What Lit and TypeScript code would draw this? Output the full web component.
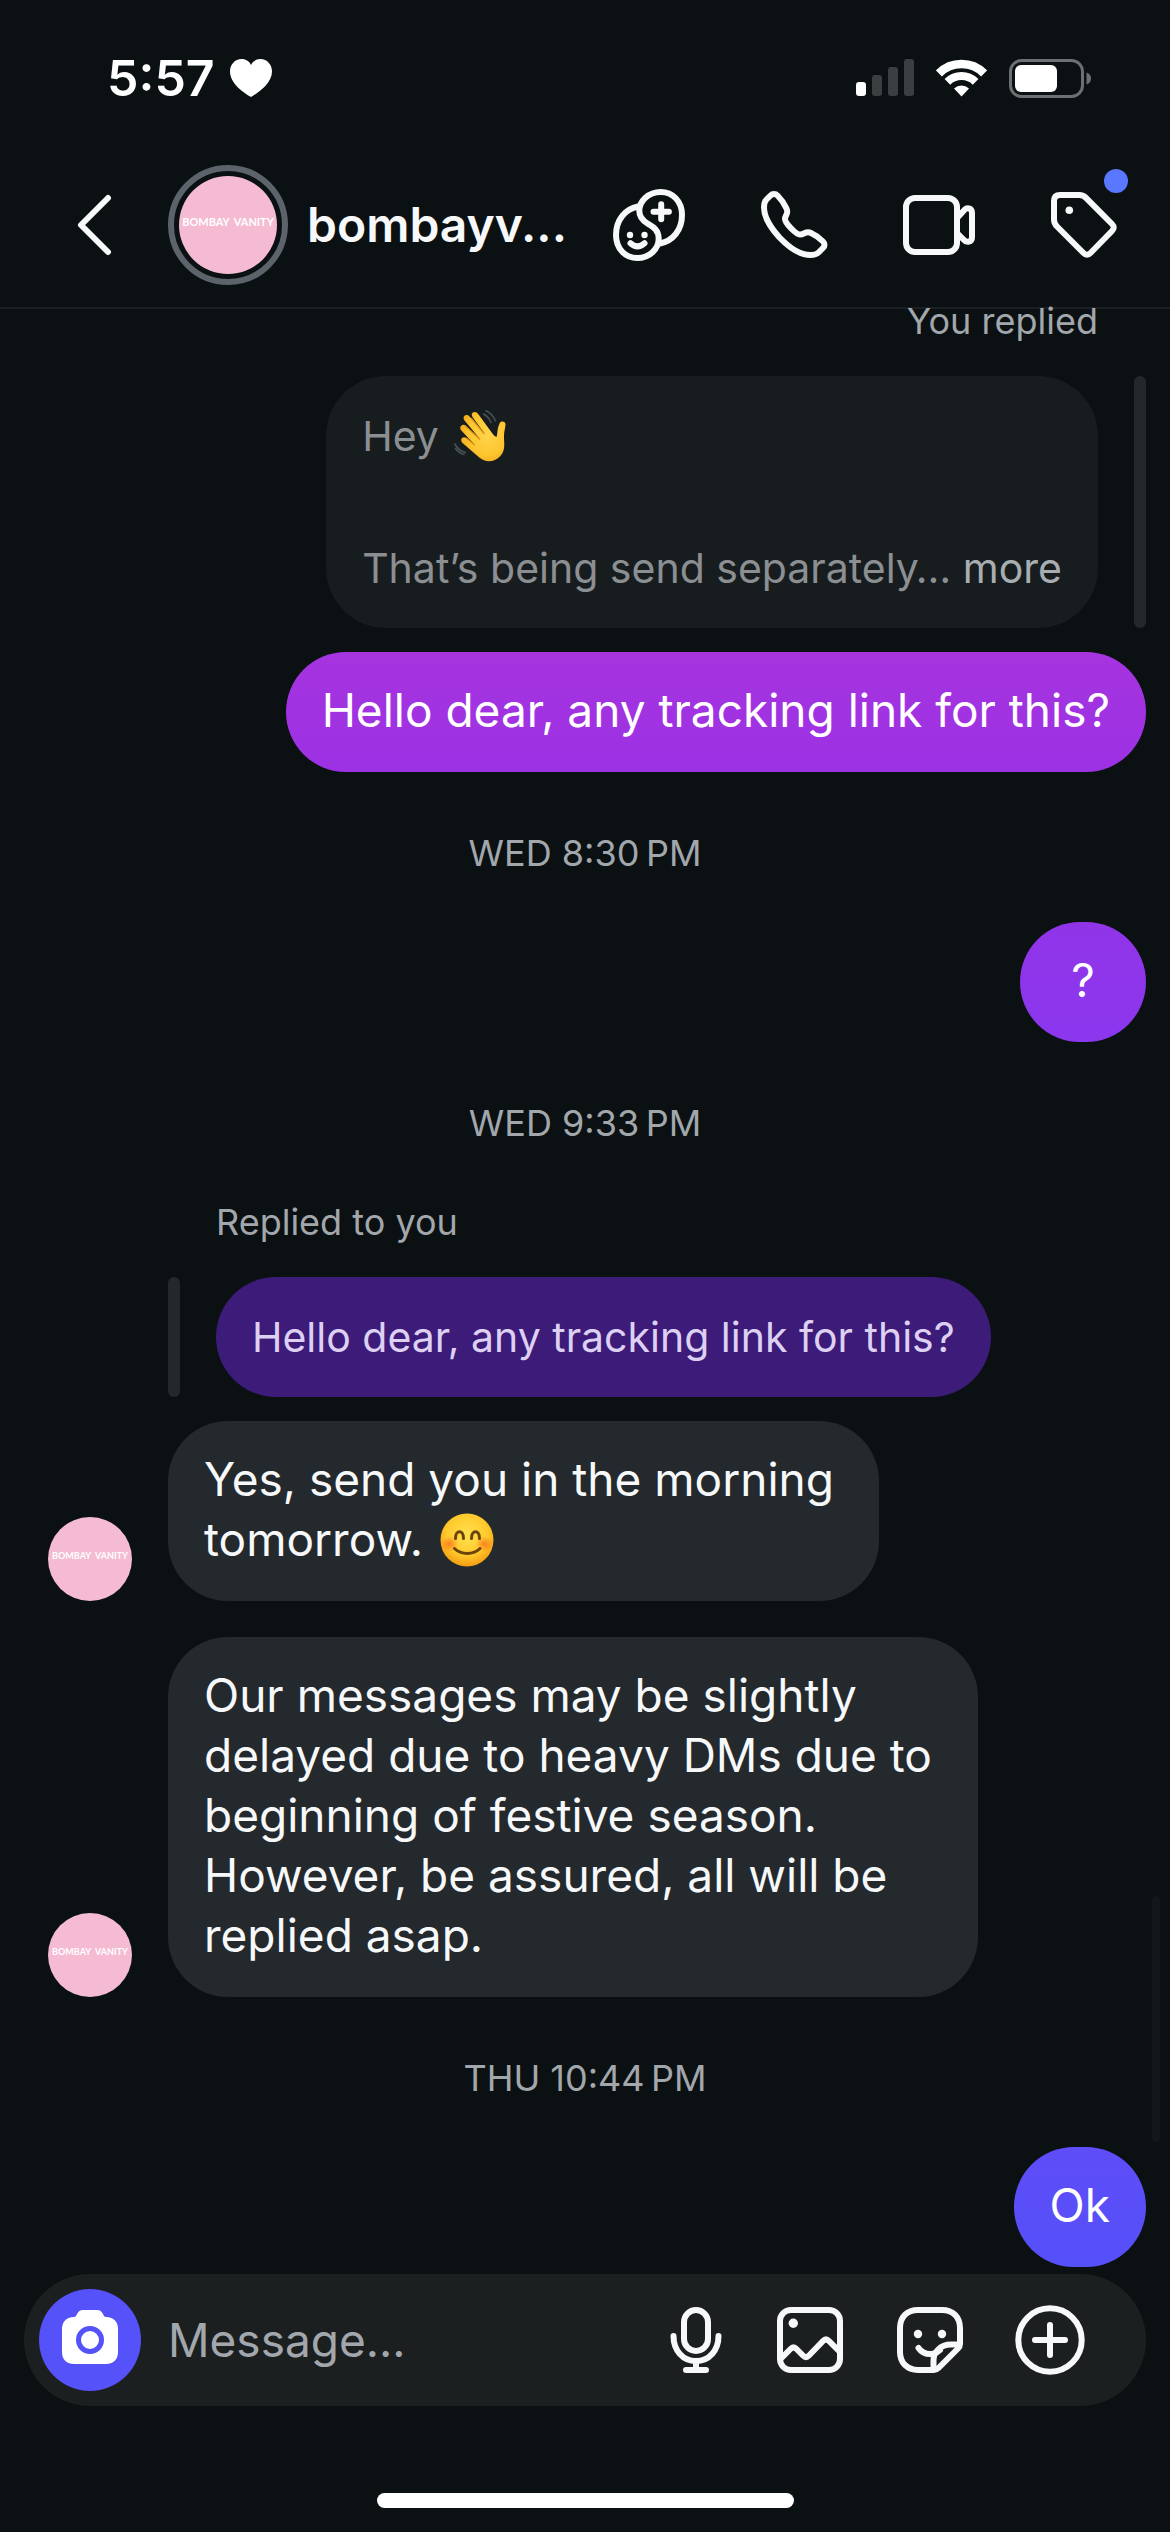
import { LitElement, html, css, svg, nothing } from "lit";
import { customElement, property } from "lit/decorators.js";

type Message =
  | { kind: "stamp"; text: string }
  | { kind: "sent"; text: string; tone: string }
  | { kind: "received"; body: unknown; size: string }
  | { kind: "sent-quote" }
  | { kind: "received-quote"; text: string };

const icons = {
  back: svg`<path d="M48 9 21 36l27 27"/>`,
  avatars: svg`
    <path d="M25 17.500C12 20 3 31 3 46c0 14 9.500 23 21.300 23C36.500 69 45.700 60 45.700 49.500 45.700 40 38.500 37 34.500 34.500 29.500 31.500 26.300 27 26.300 21.800 26.300 12 35.500 3 47.700 3 59.500 3 69 12 69 26c0 15-9 26-22 28.500"/>
    <path d="M40.500 22.700h15.400M48.200 15.200v15"/>
    <path d="M17.500 54.300q7 6.200 14 0"/>
    <circle class="dot" cx="17" cy="46" r="3.200"/><circle class="dot" cx="31.500" cy="46" r="3.200"/>`,
  phone: svg`<path d="M19.500 6.500C17.500 4.500 14.500 4.500 12.500 6.500l-4 4C6.500 12.500 6 15 6 18.500 6 29 12.500 38.500 21.500 48.500 31 58.500 42 66 52.500 66c3.500 0 6-.5 8-2.500L65 59c2-2 2-4.500 0-6.500C61.500 49 57.500 46 53 44c-5-2.500-6.500 1.500-11 1.500C38 45.500 27 34 27 30s4-5.500 1.500-10.500c-2-4.500-5-9-9-13Z"/>`,
  video: svg`<rect x="3" y="9" width="51" height="54" rx="9"/><path d="m55 28 5.500-6C63.500 18 69 18.500 69 24v24c0 5.500-5.500 6-8.500 2.500L55 45"/>`,
  tag: svg`<path d="M6 12c0-4 2-6 6-6h19.500c3 0 4.500.8 6.500 2.800L64 35c2.300 2.300 2.300 4.700 0 7L42.500 64c-2.200 2.300-4.800 2.300-7 0L9 37.500C6.800 35.300 6 33.500 6 30.500Z"/><circle class="dot" cx="21.300" cy="21.300" r="3.800"/>`,
  image: svg`<rect x="6" y="6" width="60" height="60" rx="11"/><circle class="dot" cx="19.300" cy="19.300" r="4.700"/><path d="m7 54.500 9.500-9.500c2-2 4-2 6 0l6.500 6.500c2 2 4 2 6 0L49 37c2-2 4-2 6 0l11 11"/>`,
  sticker: svg`<path d="M40 66H24C13 66 6 58.500 6 48V24C6 13 13 6 24 6h24c11 0 18 7 18 18v16c0 2-.5 3-2 4.500L44.500 64c-1.500 1.500-2.500 2-4.500 2Z"/><path d="M39.500 65v-8.500C39.500 48.500 46 40.500 57 40.500h8"/><path d="M24.500 44c3.500 5 8.500 6.500 13.500 6 3.500-.5 6-2 8-4"/><circle class="dot" cx="24" cy="30" r="4.200"/><circle class="dot" cx="48" cy="30" r="4.200"/>`,
  plus: svg`<circle cx="36" cy="36" r="31.700"/><path d="M21 36h30M36 21v30"/>`,
};

const icon = (glyph: unknown) =>
  html`<svg class="icon" viewBox="0 0 72 72" aria-hidden="true">${glyph}</svg>`;

const waveEmoji = html`<svg class="emoji wave" viewBox="0 0 52 52" role="img" aria-label="👋">
  <defs><radialGradient id="hand" cx="0.6" cy="0.45" r="0.7"><stop offset="0" stop-color="#ffd54d"/><stop offset="0.6" stop-color="#fdc62f"/><stop offset="1" stop-color="#ee9f12"/></radialGradient></defs>
  <g fill="none" stroke="#495056" stroke-width="1.600" stroke-linecap="round"><path d="M29.500 4c3.500 1.800 6 4.800 7.500 8.500M32 .8c4.500 2 7.500 5.500 9.300 10M1.500 38.500c2.200 3 5 5 8.500 6M.8 34c2.500 4.500 6 7.300 10.500 8.500"/></g>
  <path d="M42.800 26.500c.8-4.500.6-8.500 2.700-13 1.500-3.200 6.600-2.200 6 1.600-.6 4.300-1.700 7.900-1.500 12.900.4 7.500 1 13.500-4 18.500-6 6-14.500 6.300-21 .8L8.500 33c-3.600-3.600.6-7.700 4.200-4.700L20.500 34.500 7.500 20.700C4 17 8.500 12.700 12.200 16L26 29 10.500 10.500C7.500 6.500 12.300 2.800 15.500 6.500L31 24 18.500 7C15.700 2.700 21 0 24 3.700l13.500 18.500c1.600 2 4 5.500 5.300 4.300Z" fill="url(#hand)"/>
  <path d="m17.500 8.500 12.500 15M11 15.800 25.500 29M12.500 28.300l8 6.500" fill="none" stroke="#dd8e10" stroke-width="1.300" stroke-linecap="round"/>
</svg>`;

const smileEmoji = html`<svg class="emoji smile" viewBox="0 0 54 54" role="img" aria-label="😊">
  <defs>
    <radialGradient id="face" cx="0.5" cy="0.4" r="0.6"><stop offset="0" stop-color="#ffe04f"/><stop offset="0.65" stop-color="#ffca2c"/><stop offset="1" stop-color="#f59c13"/></radialGradient>
    <radialGradient id="blush"><stop offset="0" stop-color="#f8691c" stop-opacity="0.75"/><stop offset="1" stop-color="#f8691c" stop-opacity="0"/></radialGradient>
  </defs>
  <circle cx="27" cy="27" r="26.500" fill="url(#face)"/>
  <ellipse cx="9.500" cy="31" rx="9" ry="8" fill="url(#blush)"/><ellipse cx="44.500" cy="31" rx="9" ry="8" fill="url(#blush)"/>
  <g fill="none" stroke="#6b4408" stroke-width="3" stroke-linecap="round"><path d="M15.500 25.500c0-9 8-9 8 0M31.500 25.500c0-9 8-9 8 0M14.500 35.500c6.500 6.500 19 6.500 25.500 0"/></g>
</svg>`;

const thread: Message[] = [
  { kind: "sent-quote" },
  { kind: "sent", text: "Hello dear, any tracking link for this?", tone: "tone-violet" },
  { kind: "stamp", text: "WED 8:30\u202FPM" },
  { kind: "sent", text: "?", tone: "tone-purple" },
  { kind: "stamp", text: "WED 9:33\u202FPM" },
  { kind: "received-quote", text: "Hello dear, any tracking link for this?" },
  { kind: "received", body: html`Yes, send you in the morning tomorrow. ${smileEmoji}`, size: "narrow" },
  {
    kind: "received",
    body: "Our messages may be slightly delayed due to heavy DMs due to beginning of festive season. However, be assured, all will be replied asap.",
    size: "wide",
  },
  { kind: "stamp", text: "THU 10:44\u202FPM" },
  { kind: "sent", text: "Ok", tone: "tone-indigo" },
];

@customElement("shop-avatar")
export class ShopAvatar extends LitElement {
  @property({ type: Boolean, reflect: true }) ringed = false;

  static styles = css`
    :host {
      box-sizing: border-box;
      display: flex;
      flex: none;
      width: 84px;
      height: 84px;
    }
    :host([ringed]) {
      width: 120px;
      height: 120px;
      padding: 5px;
      border: 6px solid #5c636a;
      border-radius: 50%;
    }
    .disc {
      flex: 1;
      display: flex;
      align-items: center;
      justify-content: center;
      gap: 4px;
      box-sizing: border-box;
      padding-bottom: 6px;
      border-radius: 50%;
      background: #f4bbd3;
      color: #fff;
      font: 700 9px/12px Lato, sans-serif;
      white-space: nowrap;
    }
    :host([ringed]) .disc {
      font-size: 11px;
    }
  `;

  render() {
    return html`<div class="disc"><span>BOMBAY</span><span>VANITY</span></div>`;
  }
}

@customElement("app-root")
export class AppRoot extends LitElement {
  static styles = css`
    :host {
      display: flex;
      flex-direction: column;
      min-height: 100vh;
      background: #0b1013;
      color: #f6f8f9;
      font: 46px/60px Inter, sans-serif;
    }
    * {
      box-sizing: border-box;
    }
    button {
      display: block;
      padding: 0;
      border: 0;
      background: none;
      color: inherit;
      font: inherit;
      cursor: pointer;
    }
    svg {
      display: block;
      flex: none;
    }
    h1,
    p {
      margin: 0;
    }
    .icon {
      width: 72px;
      height: 72px;
      fill: none;
      stroke: currentColor;
      stroke-width: 6;
      stroke-linecap: round;
      stroke-linejoin: round;
    }
    .icon.slim {
      width: 60px;
    }
    .icon .dot {
      fill: currentColor;
      stroke: none;
    }

    .status {
      display: flex;
      align-items: center;
      height: 156px;
      padding: 0 79px 0 107px;
      color: #fff;
    }
    .clock {
      display: flex;
      align-items: center;
      gap: 15px;
      margin-right: auto;
      font-size: 50px;
      font-weight: 600;
    }
    .indicators {
      display: flex;
      align-items: center;
      gap: 22px;
    }

    header {
      display: flex;
      align-items: center;
      padding: 9px 50px 22px 60px;
      border-bottom: 2px solid #1a2023;
    }
    .back {
      margin-right: 36px;
    }
    h1 {
      flex: 1;
      min-width: 0;
      margin-left: 19px;
      overflow: hidden;
      font-size: 48px;
      font-weight: 600;
      line-height: 60px;
      white-space: nowrap;
    }
    nav {
      display: flex;
      gap: 73px;
    }
    .notified {
      position: relative;
    }
    .badge {
      position: absolute;
      top: -20px;
      right: -8px;
      width: 24px;
      height: 24px;
      border-radius: 50%;
      background: #5a77ff;
    }

    main {
      position: relative;
      flex: 1;
      display: flex;
      flex-direction: column;
      padding: 0 24px 7px 48px;
    }
    .scroll {
      position: absolute;
      right: 10px;
      bottom: 132px;
      width: 8px;
      height: 246px;
      border-radius: 4px;
      background: #12171a;
    }
    .label,
    .stamp {
      color: #a2a7ac;
      font-size: 36px;
      line-height: 48px;
    }
    .stamp {
      margin: 57px 0 45px;
      padding-right: 24px;
      text-align: center;
    }
    .quote {
      display: flex;
      flex-direction: column;
      gap: 31px;
      margin-bottom: 24px;
    }
    .quote.mine {
      align-items: flex-end;
      margin-top: -12px;
    }
    .quote.theirs {
      align-items: flex-start;
      margin-top: 6px;
      padding-left: 120px;
    }
    .label {
      padding: 0 48px;
    }
    .quoted {
      display: flex;
      gap: 36px;
    }
    .bar {
      width: 12px;
      border-radius: 6px;
      background: #23282c;
    }
    .bubble {
      padding: 28px 36px 32px;
      border-radius: 60px;
    }
    .quoted .bubble {
      padding: 27px 36px;
      font-size: 41px;
      line-height: 66px;
    }
    .faded {
      background: #171c1f;
      color: #8b8f92;
    }
    .faded button {
      display: inline;
      color: #a8adb2;
    }
    .deep {
      background: #3c1b79;
      color: #ddd0f2;
    }
    .sent {
      align-self: flex-end;
      min-width: 126px;
      color: #fff;
      text-align: center;
    }
    .tone-violet {
      background: linear-gradient(#a634df, #9c31e4);
    }
    .tone-purple {
      background: linear-gradient(#9134e8, #8b37ee);
    }
    .tone-indigo {
      background: linear-gradient(#5e4df8, #5550f9);
    }
    .received {
      display: flex;
      align-items: flex-end;
      gap: 36px;
    }
    .received + .received {
      margin-top: 36px;
    }
    .received .bubble {
      background: #24292d;
    }
    .narrow {
      max-width: 711px;
    }
    .wide {
      max-width: 810px;
    }
    .emoji {
      display: inline-block;
      vertical-align: -11px;
      margin-left: 4px;
    }
    .wave {
      width: 52px;
      height: 52px;
    }
    .smile {
      width: 54px;
      height: 54px;
    }

    .composer {
      display: flex;
      align-items: center;
      gap: 48px;
      height: 132px;
      margin: 0 24px 87px;
      padding: 0 60px 0 15px;
      border-radius: 66px;
      background: #1c1f1f;
    }
    .camera {
      display: flex;
      flex: none;
      align-items: center;
      justify-content: center;
      width: 102px;
      height: 102px;
      border-radius: 50%;
      background: #5552f9;
      color: #fff;
    }
    .field {
      flex: 1;
      display: flex;
      align-items: center;
      gap: 27px;
      min-width: 0;
    }
    input {
      flex: 1;
      min-width: 0;
      height: 60px;
      padding: 0;
      border: 0;
      outline: 0;
      background: none;
      color: inherit;
      font: inherit;
    }
    input::placeholder {
      color: #a2a7ad;
      opacity: 1;
    }
    .home {
      align-self: center;
      width: 417px;
      height: 15px;
      margin-bottom: 24px;
      border-radius: 8px;
      background: #fff;
    }
  `;

  private renderMessage(m: Message) {
    switch (m.kind) {
      case "stamp":
        return html`<p class="stamp">${m.text}</p>`;
      case "sent":
        return html`<p class="bubble sent ${m.tone}">${m.text}</p>`;
      case "received":
        return html`<div class="received">
          <shop-avatar></shop-avatar>
          <p class="bubble ${m.size}">${m.body}</p>
        </div>`;
      case "sent-quote":
        return html`<section class="quote mine">
          <p class="label">You replied</p>
          <div class="quoted">
            <p class="bubble faded">
              Hey ${waveEmoji}<br /><br />That’s being send separately… <button type="button">more</button>
            </p>
            <div class="bar"></div>
          </div>
        </section>`;
      case "received-quote":
        return html`<section class="quote theirs">
          <p class="label">Replied to you</p>
          <div class="quoted">
            <div class="bar"></div>
            <p class="bubble deep">${m.text}</p>
          </div>
        </section>`;
      default:
        return nothing;
    }
  }

  render() {
    return html`
      <div class="status">
        <div class="clock">
          5:57
          <svg width="42" height="38" viewBox="0 0 42 38" aria-hidden="true">
            <path fill="#fff" d="M21 38C15 34.500 0 25 0 12.500 0 5.500 5 0 11.500 0 16 0 19.500 2.500 21 6c1.500-3.500 5-6 9.500-6C37 0 42 5.500 42 12.500 42 25 27 34.500 21 38Z"/>
          </svg>
        </div>
        <div class="indicators">
          <svg width="58" height="38" viewBox="0 0 58 38" aria-hidden="true">
            <rect x="0" y="23" width="10" height="14" rx="3" fill="#fff"/>
            <g fill="#3b3f42"><rect x="16" y="16" width="10" height="21" rx="3"/><rect x="32" y="8" width="10" height="29" rx="3"/><rect x="48" y="0" width="10" height="37" rx="3"/></g>
          </svg>
          <svg width="51" height="38" viewBox="0 0 51 38" aria-hidden="true">
            <g fill="none" stroke="#fff"><path stroke-width="8.500" d="M2.900 14.400a32 32 0 0 1 45.200 0"/><path stroke-width="8" d="M11.400 22.900a20 20 0 0 1 28.200 0"/></g>
            <path fill="#fff" d="M25.500 37.500 18 29.500a11 11 0 0 1 15 0Z"/>
          </svg>
          <svg width="82" height="39" viewBox="0 0 82 39" aria-hidden="true">
            <rect x="1.500" y="1.500" width="72" height="36" rx="11" fill="none" stroke="#6d7072" stroke-width="3"/>
            <rect x="6" y="6" width="42" height="27" rx="6" fill="#fff"/>
            <path fill="#6d7072" d="M77.500 13.500c6 1.500 6 10.500 0 12Z"/>
          </svg>
        </div>
      </div>
      <header>
        <button class="back" type="button" aria-label="Back">${icon(icons.back)}</button>
        <shop-avatar ringed></shop-avatar>
        <h1>bombayv...</h1>
        <nav>
          <button type="button" aria-label="Avatar stickers">${icon(icons.avatars)}</button>
          <button type="button" aria-label="Audio call">${icon(icons.phone)}</button>
          <button type="button" aria-label="Video call">${icon(icons.video)}</button>
          <button class="notified" type="button" aria-label="Labels">${icon(icons.tag)}<span class="badge"></span></button>
        </nav>
      </header>
      <main>
        ${thread.map((m) => this.renderMessage(m))}
        <div class="scroll"></div>
      </main>
      <form class="composer" @submit=${(e: Event) => e.preventDefault()}>
        <div class="field">
          <button class="camera" type="button" aria-label="Camera">
            <svg width="60" height="60" viewBox="0 0 60 60" aria-hidden="true">
              <path fill="currentColor" d="M14 7c3.500 0 2.500-7 9-7h14c6.500 0 5.500 7 9 7 8 0 12 5 12 12v23c0 8-5 12-12 12H14C7 54 2 50 2 42V19C2 12 6 7 14 7Z"/>
              <circle cx="30" cy="30" r="11.500" fill="none" stroke="#5552f9" stroke-width="5"/>
            </svg>
          </button>
          <input type="text" aria-label="Message" placeholder="Message..." />
        </div>
        <button type="button" aria-label="Voice message">
          <svg class="icon slim" viewBox="0 0 60 72" aria-hidden="true"><rect x="18" y="6" width="24" height="41" rx="12"/><path d="M7.500 32c0 14.500 9.500 25 22.500 25s22.500-10.500 22.500-25M30 57v9M20 66h20"/></svg>
        </button>
        <button type="button" aria-label="Photos">${icon(icons.image)}</button>
        <button type="button" aria-label="Stickers">${icon(icons.sticker)}</button>
        <button type="button" aria-label="More">${icon(icons.plus)}</button>
      </form>
      <div class="home"></div>
    `;
  }
}
